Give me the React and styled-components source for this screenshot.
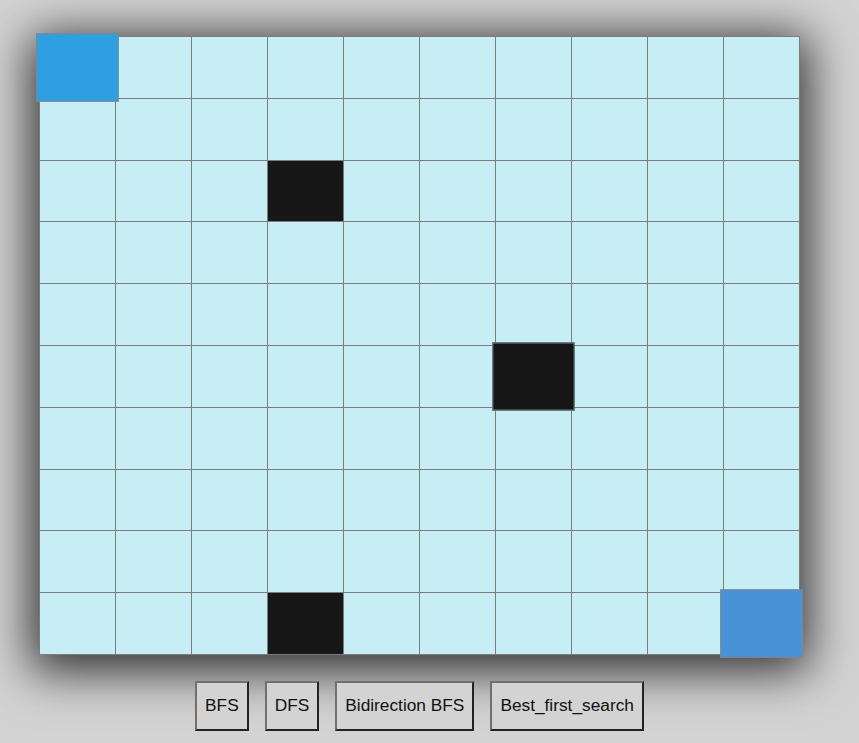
import React from 'react';
import styled, { createGlobalStyle } from 'styled-components';

const GlobalStyle = createGlobalStyle`
  html, body {
    margin: 0;
    padding: 0;
    background: #d3d3d3;
    font-family: "Liberation Sans", Arial, sans-serif;
  }
`;

const Page = styled.div`
  width: 761px;
  padding: 36px 0 0 39px;
`;

const Board = styled.div`
  display: grid;
  grid-template-columns: repeat(10, 75px);
  grid-auto-rows: 60.8px;
  gap: 1px;
  background: #7c7c7c;
  border: 1px solid #7c7c7c;
  box-shadow: 0 8px 45px 8px rgba(0, 0, 0, 0.78);
`;

const colors = {
  empty: '#c7eef4',
  wall: '#171717',
  start: '#2e9fe0',
  end: '#4a92d8',
};

const Cell = styled.div`
  background: ${(p) => colors[p.$kind]};
  box-sizing: border-box;
  ${(p) =>
    p.$big &&
    `
    transform: scale(1.1, 1.12);
    border: 1px solid #7a8a94;
    position: relative;
    z-index: 1;
  `}
`;

const Controls = styled.div`
  display: flex;
  justify-content: center;
  gap: 16px;
  margin-top: 26px;
`;

const Button = styled.button`
  height: 50px;
  padding: 0 8px;
  background: #d3d3d3;
  border: 2px solid;
  border-color: #707070 #222 #222 #707070;
  font-family: "Liberation Sans", Arial, sans-serif;
  font-size: 17.3px;
  color: #111;
  cursor: pointer;
`;

const special = {
  '2-3': { kind: 'wall' },
  '5-6': { kind: 'wall', big: true },
  '9-3': { kind: 'wall' },
  '0-0': { kind: 'start', big: true },
  '9-9': { kind: 'end', big: true },
};

const App = () => {
  const cells = [];
  for (let r = 0; r < 10; r++) {
    for (let c = 0; c < 10; c++) {
      const s = special[`${r}-${c}`];
      cells.push(
        <Cell
          key={`${r}-${c}`}
          $kind={s ? s.kind : 'empty'}
          $big={s && s.big}
        />
      );
    }
  }

  return (
    <>
      <GlobalStyle />
      <Page>
        <Board>{cells}</Board>
        <Controls>
          <Button>BFS</Button>
          <Button>DFS</Button>
          <Button>Bidirection BFS</Button>
          <Button>Best_first_search</Button>
        </Controls>
      </Page>
    </>
  );
};

export default App;
